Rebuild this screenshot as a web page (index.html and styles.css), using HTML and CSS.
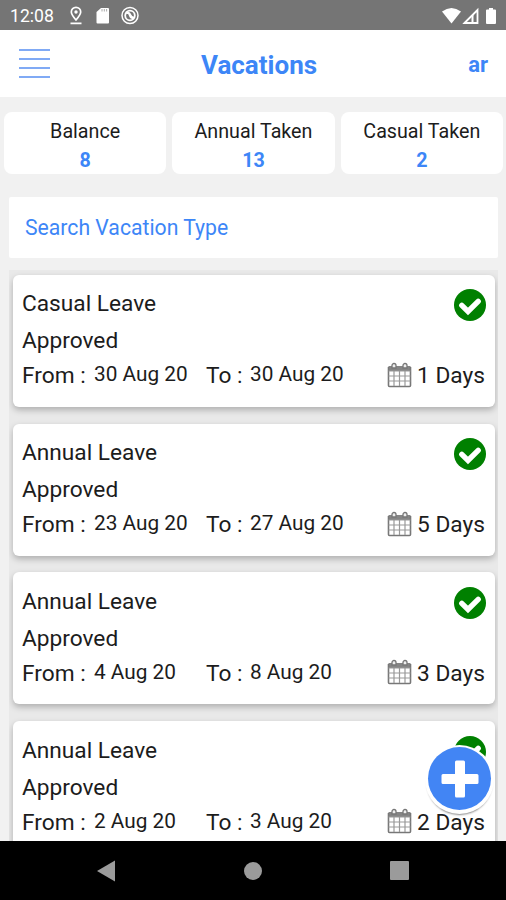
FILE: index.html
```html
<!DOCTYPE html>
<html lang="en">
<head>
    <meta charset="utf-8">
    <title>Vacations</title>
    <link rel="stylesheet" href="styles.css">
</head>
<body>
    <!-- shared icons -->
    <svg class="sprite">
        <symbol id="check" viewBox="0 0 32 32">
            <circle cx="16" cy="16" r="16" fill="#008000"/>
            <path d="M7.8 16.300l6.200 6.200L24.200 12.300" fill="none" stroke="#fff" stroke-width="5.400" stroke-linecap="round"/>
        </symbol>
        <symbol id="calendar" viewBox="0 0 24 26">
            <path d="M1 4h22v5H1z" fill="#858585"/>
            <path d="M1 5v18.500q0 1 1 1h20q1 0 1-1V5" fill="none" stroke="#777" stroke-width="1.600"/>
            <path d="M1 9h22M1 14h22M1 19h22M6.500 9v15M12 9v15M17.500 9v15" fill="none" stroke="#999" stroke-width="1.200"/>
            <path d="M4.500 6V3.500a2 2 0 0 1 4 0V6zM15.500 6V3.500a2 2 0 0 1 4 0V6z" fill="#eee" stroke="#777" stroke-width="1.300"/>
        </symbol>
    </svg>

    <div class="status-bar">
        <span class="time">12:08</span>
        <svg class="notifications" width="70" height="20" viewBox="0 0 70 20" fill="none" stroke="#fff">
            <path d="M7 14C4 10.500 2.300 8.500 2.300 6a4.700 4.700 0 0 1 9.400 0C11.700 8.500 10 10.500 7 14zM1.500 17.300h11" stroke-width="1.700"/>
            <circle cx="7" cy="6" r="1.700" fill="#fff" stroke="none"/>
            <path d="M32 2h7q1 0 1 1v13.500q0 1-1 1H28.500q-1 0-1-1V6z" fill="#fff" stroke="none"/>
            <path d="M33 3v2.500M35.300 3v2.500M37.600 3v2.500" stroke="#aaa"/>
            <circle cx="61" cy="9.500" r="8" stroke-width="1.500"/>
            <circle cx="61" cy="9.500" r="4.800" stroke-width="1.800"/>
            <path d="M57 7q3-1 4 2t4 3" stroke-width="2.500"/>
        </svg>
        <svg class="signals" width="56" height="18" viewBox="0 0 56 18">
            <path d="M0 4.500Q9.500-2.500 19 4.500L9.500 16.500z" fill="#fff"/>
            <path d="M22.500 16L35.500 3v13z" fill="none" stroke="#fff" stroke-width="1.800"/>
            <path d="M30.500 8v7.500" stroke="#fff" stroke-width="2"/>
            <path d="M47 1h4v1.500h2q1 0 1 1V16q0 1-1 1h-8q-1 0-1-1V3.500q0-1 1-1h2z" fill="#fff"/>
        </svg>
    </div>

    <div class="header">
        <div class="menu">
            <span></span>
            <span></span>
            <span></span>
            <span></span>
        </div>
        <h1>Vacations</h1>
        <span class="lang">ar</span>
    </div>

    <div class="stats">
        <div class="stat"><span>Balance</span><b>8</b></div>
        <div class="stat"><span>Annual Taken</span><b>13</b></div>
        <div class="stat"><span>Casual Taken</span><b>2</b></div>
    </div>

    <input class="search" type="text" placeholder="Search Vacation Type">

    <div class="list">
        <div class="card">
            <svg class="check"><use href="#check"/></svg>
            <div class="type">Casual Leave</div>
            <div class="state">Approved</div>
            <div class="dates">
                <span>From :</span><span class="date">30 Aug 20</span>
                <span>To :</span><span class="date">30 Aug 20</span>
                <svg class="calendar"><use href="#calendar"/></svg><span>1 Days</span>
            </div>
        </div>
        <div class="card">
            <svg class="check"><use href="#check"/></svg>
            <div class="type">Annual Leave</div>
            <div class="state">Approved</div>
            <div class="dates">
                <span>From :</span><span class="date">23 Aug 20</span>
                <span>To :</span><span class="date">27 Aug 20</span>
                <svg class="calendar"><use href="#calendar"/></svg><span>5 Days</span>
            </div>
        </div>
        <div class="card">
            <svg class="check"><use href="#check"/></svg>
            <div class="type">Annual Leave</div>
            <div class="state">Approved</div>
            <div class="dates">
                <span>From :</span><span class="date">4 Aug 20</span>
                <span>To :</span><span class="date">8 Aug 20</span>
                <svg class="calendar"><use href="#calendar"/></svg><span>3 Days</span>
            </div>
        </div>
        <div class="card">
            <svg class="check"><use href="#check"/></svg>
            <div class="type">Annual Leave</div>
            <div class="state">Approved</div>
            <div class="dates">
                <span>From :</span><span class="date">2 Aug 20</span>
                <span>To :</span><span class="date">3 Aug 20</span>
                <svg class="calendar"><use href="#calendar"/></svg><span>2 Days</span>
            </div>
        </div>
    </div>

    <div class="add">
        <svg width="38" height="38" viewBox="0 0 38 38">
            <path d="M14 2q0-1.500 1.500-1.500h7q1.500 0 1.500 1.500v12h12q1.500 0 1.500 1.500v7q0 1.500-1.500 1.500H24v12q0 1.500-1.500 1.500h-7q-1.500 0-1.500-1.500V24H2q-1.500 0-1.500-1.500v-7Q.5 14 2 14h12z" fill="#fff"/>
        </svg>
    </div>

    <div class="nav-bar">
        <svg width="18" height="22" viewBox="0 0 18 22"><path d="M0 11L18 .5v21z" fill="#9b9b9b"/></svg>
        <svg width="18" height="18" viewBox="0 0 18 18"><circle cx="9" cy="9" r="9" fill="#9b9b9b"/></svg>
        <svg width="19" height="19" viewBox="0 0 19 19"><rect width="19" height="19" rx="1" fill="#9b9b9b"/></svg>
    </div>
</body>
</html>
```
FILE: styles.css
```css
* {
    box-sizing: border-box;
}

body {
    display: flex;
    flex-direction: column;
    height: 900px;
    margin: 0;
    overflow: hidden;
    background-color: #f1f1f1;
    color: #1c1c1c;
    font-family: Roboto, "Liberation Sans", sans-serif;
}

.sprite {
    position: absolute;
    width: 0;
    height: 0;
}

.status-bar {
    display: flex;
    flex: none;
    align-items: center;
    height: 30px;
    padding: 0 8px 0 10px;
    background-color: #757575;
    color: #fff;
}

.time {
    width: 59px;
    font-size: 17.6px;
    line-height: 30px;
    padding-top: 2px;
}

.notifications {
    margin-top: 2px;
}

.signals {
    margin-top: 1px;
    margin-left: auto;
}

.header {
    display: grid;
    flex: none;
    grid-template-columns: 182px 1fr auto;
    align-items: center;
    height: 67px;
    padding: 0 18px 0 19px;
    background-color: #fff;
    color: #3d86f7;
}

.menu {
    display: flex;
    flex-direction: column;
    gap: 7px;
    width: 31px;
}

.menu span {
    height: 2px;
    background-color: #80aaf5;
}

.header h1 {
    margin: 3px 0 0;
    font-size: 26px;
    font-weight: 700;
}

.lang {
    margin-top: 2px;
    font-size: 22px;
    font-weight: 700;
}

.stats {
    display: flex;
    flex: none;
    gap: 6px;
    height: 62px;
    margin: 15px 3px 0 4px;
}

.stat {
    display: flex;
    flex: 1;
    flex-direction: column;
    align-items: center;
    padding-top: 5px;
    border-radius: 8px;
    background-color: #fff;
    font-size: 19.7px;
    line-height: 29px;
}

.stat b {
    color: #3d86f7;
}

.search {
    flex: none;
    height: 61px;
    margin: 23px 8px 12px 9px;
    padding: 0 16px;
    border: none;
    border-radius: 2px;
    background-color: #fff;
    font-family: inherit;
    font-size: 21.2px;
}

.search::placeholder {
    color: #3d86f7;
    opacity: 1;
}

.list {
    flex: 1;
    min-height: 0;
    margin: 0 8px 0 9px;
    padding: 4.7px 3px 0 4px;
    overflow: hidden;
    background-color: #e9e9e9;
}

.card {
    height: 132px;
    margin-bottom: 16.9px;
    padding: 10.5px 9px 0;
    border-radius: 6px;
    background-color: #fff;
    box-shadow: 0 3px 6px rgba(0, 0, 0, 0.25);
    font-size: 22.7px;
    line-height: 37px;
}

.check {
    float: right;
    width: 32px;
    height: 32px;
    margin-top: 4px;
}

.dates {
    display: grid;
    grid-template-columns: 72px 112px 44px 137px 30px auto;
    align-items: center;
    line-height: 31px;
    white-space: nowrap;
}

.date {
    padding-bottom: 2px;
    font-size: 20.8px;
}

.calendar {
    width: 25px;
    height: 26px;
    margin-bottom: 2px;
}

.add {
    position: absolute;
    top: 747px;
    left: 428px;
    display: flex;
    align-items: center;
    justify-content: center;
    width: 63px;
    height: 63px;
    border-radius: 50%;
    background-color: #4285f4;
    box-shadow: 0 1px 0 3px #fff, 0 4px 2px 1px #888;
}

.nav-bar {
    display: flex;
    flex: none;
    align-items: center;
    justify-content: space-between;
    height: 59px;
    padding: 0 97px;
    background-color: #000;
}
```
